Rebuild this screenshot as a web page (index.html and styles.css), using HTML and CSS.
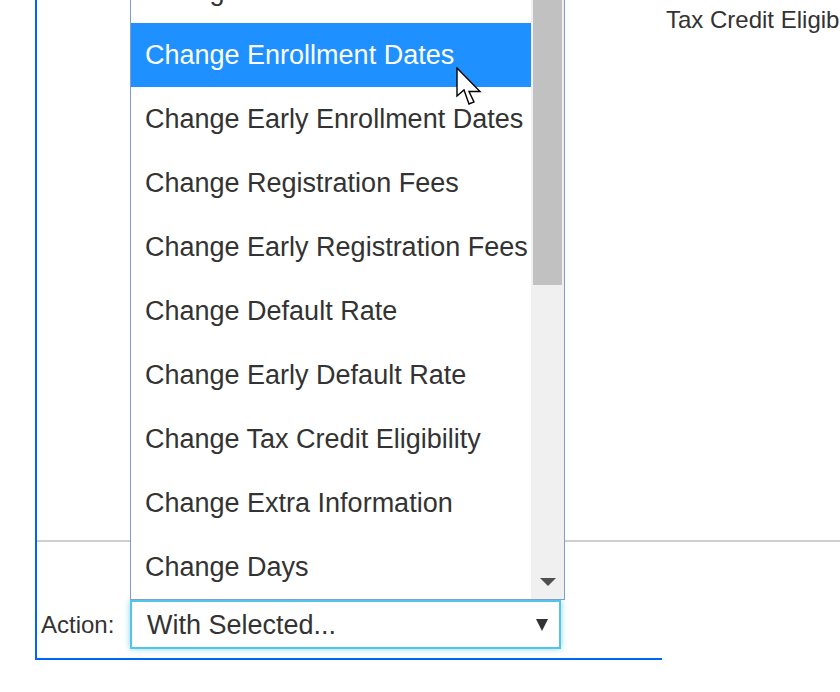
FILE: index.html
```html
<!DOCTYPE html>
<html>
<head>
<meta charset="utf-8">
<link rel="stylesheet" href="styles.css">
</head>
<body>
<div class="panel">
  <div class="content">
    <div class="col-label">Tax Credit Eligibility</div>
  </div>
  <div class="sep"></div>
  <div class="action-row">
    <label class="action-label">Action:</label>
    <div class="select">
      <span class="select-text">With Selected...</span>
      <svg class="select-arrow" width="12" height="12" viewBox="0 0 12 12"><polygon points="0,0 12,0 6,12" fill="#333"/></svg>
    </div>
  </div>
</div>

<div class="dropdown">
  <ul class="options">
    <li class="opt">Change Name</li>
    <li class="opt active">Change Enrollment Dates</li>
    <li class="opt">Change Early Enrollment Dates</li>
    <li class="opt">Change Registration Fees</li>
    <li class="opt">Change Early Registration Fees</li>
    <li class="opt">Change Default Rate</li>
    <li class="opt">Change Early Default Rate</li>
    <li class="opt">Change Tax Credit Eligibility</li>
    <li class="opt">Change Extra Information</li>
    <li class="opt">Change Days</li>
  </ul>
  <div class="scrollbar">
    <div class="thumb"></div>
    <div class="track"></div>
    <svg class="down" width="16" height="8" viewBox="0 0 16 8"><polygon points="0,0 16,0 8,8" fill="#505050"/></svg>
  </div>
</div>

<svg class="cursor" width="28" height="40" viewBox="0 0 28 40"><polygon points="1,1 1,29 8,23 13,37 18,35 13,24.5 24,24.5" fill="#fff" stroke="#000" stroke-width="1.4" stroke-linejoin="miter"/></svg>
</body>
</html>
```

FILE: styles.css
```css
html, body {
  margin: 0;
  padding: 0;
  width: 840px;
  height: 692px;
  overflow: hidden;
  background: #fff;
  font-family: "Liberation Sans", Arial, sans-serif;
  color: #333;
}

.panel {
  margin-left: 35px;
  width: 625px;
  border-left: 2px solid #0064f5;
  border-bottom: 2px solid #0064f5;
}

.content {
  height: 540px;
  position: relative;
}

.col-label {
  padding-top: 8px;
  margin-left: 629px;
  white-space: nowrap;
  font-size: 24px;
  line-height: 24px;
}

.sep {
  width: 803px;
  height: 2px;
  background: #cfcfcf;
}

.action-row {
  display: flex;
  align-items: center;
  padding: 58px 0 9px 4px;
}

.action-label {
  width: 89px;
  font-size: 24px;
  line-height: 24px;
}

.select {
  box-sizing: border-box;
  width: 431px;
  height: 49px;
  border: 2px solid #52c5ea;
  box-shadow: 0 0 6px rgba(82, 197, 234, 0.7);
  display: flex;
  align-items: center;
  justify-content: space-between;
  padding: 0 11px 0 15px;
  background: #fff;
}

.select-text {
  font-size: 27px;
  line-height: 30px;
}

.dropdown {
  position: absolute;
  left: 130px;
  top: -41px;
  width: 435px;
  height: 641px;
  box-sizing: border-box;
  border: 1px solid #7f9ccf;
  border-top: none;
  background: #fff;
  display: flex;
}

.options {
  list-style: none;
  margin: 0;
  padding: 0;
  width: 400px;
}

.opt {
  height: 64px;
  box-sizing: border-box;
  padding: 0 0 0 14px;
  font-size: 27px;
  line-height: 64px;
  white-space: nowrap;
  color: #333;
}

.opt.active {
  background: #1e90ff;
  color: #fff;
}

.scrollbar {
  flex: 1;
  background: #f0f0f0;
  display: flex;
  flex-direction: column;
  align-items: center;
  padding-bottom: 13px;
}

.thumb {
  width: 29px;
  height: 326px;
  background: #c1c1c1;
}

.track {
  flex: 1;
}

.down {
  display: block;
  margin-left: 1px;
}

.cursor {
  position: absolute;
  left: 456px;
  top: 67px;
}
```
